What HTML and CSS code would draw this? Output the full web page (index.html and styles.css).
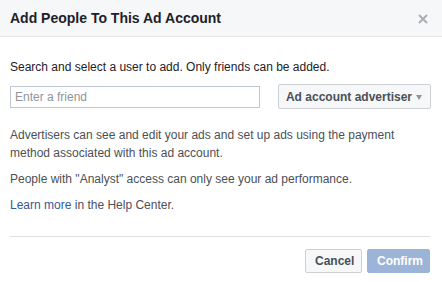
FILE: index.html
```html
<!DOCTYPE html>
<html>
<head>
<meta charset="utf-8">
<link rel="stylesheet" href="styles.css">
</head>
<body>
<div class="dialog">
  <div class="header">
    <span class="title">Add People To This Ad Account</span>
    <span class="close">
      <svg width="10" height="10" viewBox="0 0 10 10"><path d="M1 1L9 9M9 1L1 9" stroke="#a8abb1" stroke-width="1.8"/></svg>
    </span>
  </div>
  <div class="body">
    <p class="intro">Search and select a user to add. Only friends can be added.</p>
    <div class="row">
      <div class="input">Enter a friend</div>
      <div class="select">Ad account advertiser<span class="caret"></span></div>
    </div>
    <p class="info first">Advertisers can see and edit your ads and set up ads using the payment method associated with this ad account.</p>
    <p class="info">People with "Analyst" access can only see your ad performance.</p>
    <p class="info"><a class="link">Learn more</a> in the Help Center.</p>
  </div>
  <div class="footer">
    <div class="btn cancel">Cancel</div>
    <div class="btn confirm">Confirm</div>
  </div>
</div>
</body>
</html>
```
FILE: styles.css
```css
* { box-sizing: border-box; }
html, body { margin: 0; padding: 0; background: #fff; }
body { font-family: "Liberation Sans", Arial, sans-serif; font-size: 12px; color: #1d2129; }
.dialog { width: 442px; height: 282px; background: #fff; }
.header {
  height: 37px;
  background: #f6f7f9;
  border-bottom: 1px solid #e5e5e5;
  display: flex;
  align-items: center;
  justify-content: space-between;
  padding: 0 14px 0 10px;
}
.title { font-size: 14px; font-weight: bold; color: #1d2129; }
.close { display: flex; margin-top: 2px; }
.body { padding: 22px 10px 0 10px; }
.intro { margin: 0; line-height: 16px; }
.row { display: flex; justify-content: space-between; align-items: center; margin-top: 9px; width: 421px; }
.input {
  width: 250px; height: 22px;
  border: 1px solid #bdc7d8;
  padding: 0 4px;
  line-height: 20px;
  color: #90949c;
}
.select {
  height: 25px;
  border: 1px solid #ced0d4;
  border-radius: 2px;
  background: #f6f7f9;
  font-weight: bold;
  color: #4b4f56;
  padding: 0 8px 0 7px;
  display: flex; align-items: center;
  white-space: nowrap;
}
.caret {
  display: inline-block;
  margin-left: 4px;
  margin-top: 1px;
  width: 0; height: 0;
  border-left: 3.5px solid transparent;
  border-right: 3.5px solid transparent;
  border-top: 5px solid #90949c;
}
.info { margin: 8px 0 0; line-height: 18px; color: #4b4f56; width: 400px; }
.info.first { margin-top: 17px; }
.link { color: #365899; text-decoration: none; }
.footer {
  margin: 22px 12px 0 10px;
  border-top: 1px solid #dddfe2;
  padding-top: 12px;
  display: flex;
  justify-content: flex-end;
  gap: 5px;
}
.btn {
  height: 24px;
  line-height: 22px;
  padding: 0 9px;
  border-radius: 2px;
  font-weight: bold;
  font-size: 12px;
  border: 1px solid;
}
.cancel { background: #f6f7f9; border-color: #ced0d4; color: #4b4f56; width: 57px; text-align: center; }
.confirm { background: #9cb4d8; border-color: #9cb4d8; color: #fff; width: 63px; text-align: center; }
```
